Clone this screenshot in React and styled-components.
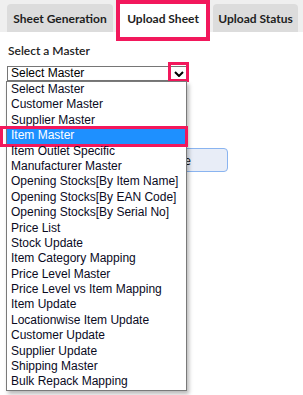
import React from "react";
import styled, { createGlobalStyle } from "styled-components";

const PINK = "#f2185c";

const GlobalStyle = createGlobalStyle`
  body {
    margin: 0;
    background: #ffffff;
    font-family: Lato, "Open Sans", sans-serif;
  }
`;

const Page = styled.div`
  position: relative;
  width: 303px;
  height: 395px;
  overflow: hidden;
`;

const TabBar = styled.div`
  display: flex;
  align-items: flex-end;
  gap: 3px;
  height: 32px;
  padding: 4px 0 0 7px;
  box-sizing: border-box;
  background: #efefef;
`;

const Tab = styled.div`
  position: relative;
  display: flex;
  align-items: center;
  justify-content: center;
  width: ${(p) => p.$width}px;
  height: 28px;
  padding-top: 1px;
  box-sizing: border-box;
  border-radius: 4px 4px 0 0;
  background: ${(p) => (p.$active ? "#ffffff" : "#dcdcdc")};
  color: #1e1e1e;
  font-size: 12px;
  font-weight: 700;
  white-space: nowrap;

  ${(p) =>
    p.$active &&
    `
    &::after {
      content: "";
      position: absolute;
      top: -4px;
      left: 0;
      right: 0;
      bottom: -9px;
      border: 4px solid ${PINK};
    }
  `}
`;

const Content = styled.div`
  padding: 0 8px 0 7px;
`;

const Label = styled.div`
  margin-top: 11px;
  padding-left: 1px;
  font-size: 12px;
  line-height: 15px;
  font-weight: 600;
  color: #222;
`;

const Select = styled.div`
  position: relative;
  display: flex;
  align-items: center;
  justify-content: space-between;
  width: 180px;
  height: 15px;
  margin-top: 8px;
  box-sizing: border-box;
  border: 1px solid #767676;
  padding-left: 3px;
  font-family: "Liberation Sans", Arial, sans-serif;
  font-size: 12px;
  line-height: 13px;
  color: #000;
`;

const ArrowBox = styled.div`
  position: relative;
  display: flex;
  align-items: center;
  justify-content: center;
  width: 15px;
  height: 13px;

  &::after {
    content: "";
    position: absolute;
    top: -5px;
    bottom: -2px;
    left: -3px;
    right: -3px;
    border: 3px solid ${PINK};
  }
`;

const Row = styled.div`
  display: flex;
  justify-content: flex-end;
  width: 221px;
  margin-top: 67px;
`;

const Button = styled.button`
  height: 24px;
  padding: 0 36px 0 10px;
  border: 1px solid #8ab4f0;
  border-radius: 4px;
  background: #e8edf7;
  color: #111;
  font-family: Lato, sans-serif;
  font-size: 13px;
`;

const List = styled.ul`
  position: absolute;
  top: 81px;
  left: 6px;
  width: 181px;
  margin: 0;
  padding: 0;
  list-style: none;
  box-sizing: border-box;
  border: 1px solid #7a7a7a;
  background: #ffffff;
  box-shadow: 2px 3px 4px rgba(0, 0, 0, 0.28);
  font-family: "Liberation Sans", Arial, sans-serif;
  font-size: 12px;
  line-height: 15.4px;
`;

const Option = styled.li`
  position: relative;
  height: 15.4px;
  padding-left: 4px;
  white-space: nowrap;
  color: ${(p) => (p.$selected ? "#ffffff" : "#0a0a1e")};
  background: ${(p) => (p.$selected ? "#1e90ff" : "transparent")};

  ${(p) =>
    p.$selected &&
    `
    &::after {
      content: "";
      position: absolute;
      top: -2px;
      bottom: -3px;
      left: -7px;
      right: -2px;
      border: 3px solid ${PINK};
    }
  `}
`;

const masters = [
  "Select Master",
  "Customer Master",
  "Supplier Master",
  "Item Master",
  "Item Outlet Specific",
  "Manufacturer Master",
  "Opening Stocks[By Item Name]",
  "Opening Stocks[By EAN Code]",
  "Opening Stocks[By Serial No]",
  "Price List",
  "Stock Update",
  "Item Category Mapping",
  "Price Level Master",
  "Price Level vs Item Mapping",
  "Item Update",
  "Locationwise Item Update",
  "Customer Update",
  "Supplier Update",
  "Shipping Master",
  "Bulk Repack Mapping",
];

const Chevron = () => (
  <svg width="10" height="6" viewBox="0 0 10 6">
    <polyline
      points="1,1 5,5 9,1"
      fill="none"
      stroke="#000"
      strokeWidth="2"
    />
  </svg>
);

const App = () => {
  return (
    <Page>
      <GlobalStyle />
      <TabBar>
        <Tab $width={106}>Sheet Generation</Tab>
        <Tab $width={94} $active>
          Upload Sheet
        </Tab>
        <Tab $width={85}>Upload Status</Tab>
      </TabBar>
      <Content>
        <Label>Select a Master</Label>
        <Select>
          <span>Select Master</span>
          <ArrowBox>
            <Chevron />
          </ArrowBox>
        </Select>
        <Row>
          <Button>Choose File</Button>
        </Row>
      </Content>
      <List>
        {masters.map((m) => (
          <Option key={m} $selected={m === "Item Master"}>
            {m}
          </Option>
        ))}
      </List>
    </Page>
  );
};

export default App;
